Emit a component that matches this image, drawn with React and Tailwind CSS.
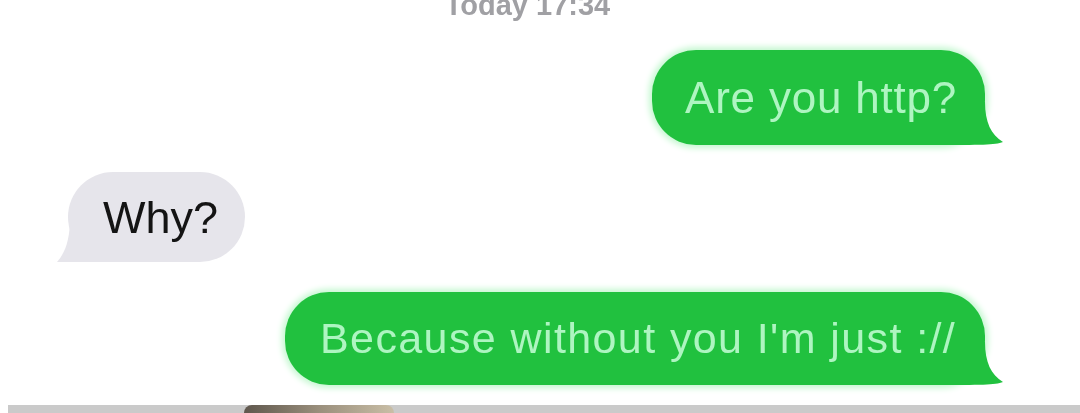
// iMessage-style conversation screenshot

const GreenTail = () => (
  <svg
    className="absolute right-[-20px] bottom-[-2px]"
    width="70"
    height="45"
    viewBox="0 0 70 45"
  >
    <path d="M0 0 L50 0 C50 20 56 33 68 40 C60 43 46 43 0 43 Z" fill="#21c13f" />
  </svg>
);

const GrayTail = () => (
  <svg
    className="absolute left-[-12px] bottom-[-1px]"
    width="70"
    height="45"
    viewBox="0 0 70 45"
  >
    <path d="M70 0 L14 0 C14 20 10 34 1 44 C14 44 30 44 70 44 Z" fill="#e6e5eb" />
  </svg>
);

const App = () => {
  return (
    <div
      className="w-[1080px] h-[413px] bg-white overflow-hidden flex flex-col"
      style={{ fontFamily: '"Liberation Sans", Arial, sans-serif' }}
    >
      {/* timestamp */}
      <div className="h-[50px] flex justify-center pr-[25px]">
        <span className="text-[29px] font-bold leading-none -mt-[9px] text-[#a0a0a4] blur-[0.7px]">
          Today 17:34
        </span>
      </div>

      {/* outgoing 1 */}
      <div className="flex justify-end pr-[95px]">
        <div className="relative w-[333px] h-[95px] rounded-[44px] bg-[#21c13f] shadow-[0_0_6px_3px_#c4f7d0] flex items-center pl-[33px]">
          <GreenTail />
          <span className="relative text-[44px] tracking-[0.8px] leading-none text-[#aef5c1] blur-[0.3px]">
            Are you http?
          </span>
        </div>
      </div>

      {/* incoming */}
      <div className="flex pl-[68px] mt-[27px]">
        <div className="relative w-[177px] h-[90px] rounded-[45px] bg-[#e6e5eb] flex items-center pl-[35px]">
          <GrayTail />
          <span className="relative text-[45px] leading-none text-[#141414] blur-[0.3px]">
            Why?
          </span>
        </div>
      </div>

      {/* outgoing 2 */}
      <div className="flex justify-end pr-[95px] mt-[30px]">
        <div className="relative w-[700px] h-[93px] rounded-[44px] bg-[#21c13f] shadow-[0_0_6px_3px_#c4f7d0] flex items-center pl-[35px]">
          <GreenTail />
          <span className="relative text-[43px] tracking-[1.4px] leading-none text-[#aef5c1] blur-[0.3px]">
            Because without you I'm just ://
          </span>
        </div>
      </div>

      {/* bottom strip */}
      <div className="mt-[20px] flex-1 ml-[8px] bg-[#cacaca] flex">
        <div className="ml-[236px] w-[150px] rounded-t-[30px] bg-gradient-to-r from-[#5f574d] via-[#9a8f7c] to-[#c9bea6]" />
      </div>
    </div>
  );
};

export default App;
